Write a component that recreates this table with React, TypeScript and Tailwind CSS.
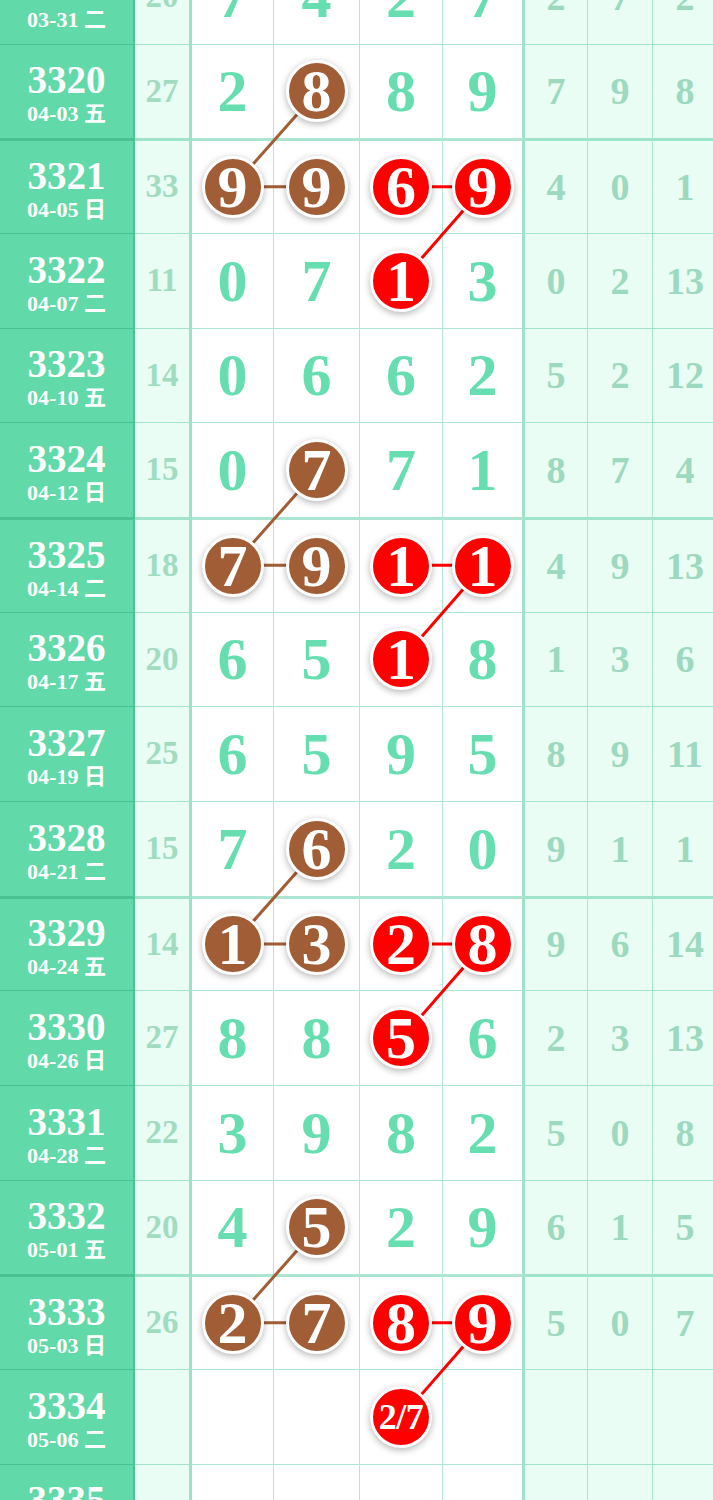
import React from "react";

type Row = { p: string; d: string; s: string; n: string[]; r: string[] };

const rows: Row[] = [
  { p: "3319", d: "03-31 二", s: "20", n: ["7", "4", "2", "7"], r: ["2", "7", "2"] },
  { p: "3320", d: "04-03 五", s: "27", n: ["2", "8", "8", "9"], r: ["7", "9", "8"] },
  { p: "3321", d: "04-05 日", s: "33", n: ["9", "9", "6", "9"], r: ["4", "0", "1"] },
  { p: "3322", d: "04-07 二", s: "11", n: ["0", "7", "1", "3"], r: ["0", "2", "13"] },
  { p: "3323", d: "04-10 五", s: "14", n: ["0", "6", "6", "2"], r: ["5", "2", "12"] },
  { p: "3324", d: "04-12 日", s: "15", n: ["0", "7", "7", "1"], r: ["8", "7", "4"] },
  { p: "3325", d: "04-14 二", s: "18", n: ["7", "9", "1", "1"], r: ["4", "9", "13"] },
  { p: "3326", d: "04-17 五", s: "20", n: ["6", "5", "1", "8"], r: ["1", "3", "6"] },
  { p: "3327", d: "04-19 日", s: "25", n: ["6", "5", "9", "5"], r: ["8", "9", "11"] },
  { p: "3328", d: "04-21 二", s: "15", n: ["7", "6", "2", "0"], r: ["9", "1", "1"] },
  { p: "3329", d: "04-24 五", s: "14", n: ["1", "3", "2", "8"], r: ["9", "6", "14"] },
  { p: "3330", d: "04-26 日", s: "27", n: ["8", "8", "5", "6"], r: ["2", "3", "13"] },
  { p: "3331", d: "04-28 二", s: "22", n: ["3", "9", "8", "2"], r: ["5", "0", "8"] },
  { p: "3332", d: "05-01 五", s: "20", n: ["4", "5", "2", "9"], r: ["6", "1", "5"] },
  { p: "3333", d: "05-03 日", s: "26", n: ["2", "7", "8", "9"], r: ["5", "0", "7"] },
  { p: "3334", d: "05-06 二", s: "", n: ["", "", "2/7", ""], r: ["", "", ""] },
  { p: "3335", d: "05-08 五", s: "", n: ["", "", "", ""], r: ["", "", ""] },
];

const brown = new Set(["1-1", "2-0", "2-1", "5-1", "6-0", "6-1", "9-1", "10-0", "10-1", "13-1", "14-0", "14-1"]);
const red = new Set(["2-2", "2-3", "3-2", "6-2", "6-3", "7-2", "10-2", "10-3", "11-2", "14-2", "14-3", "15-2"]);
const thickRows = new Set([2, 6, 10, 14]);

const RH = 94.67;
const XC = [233, 317, 401.5, 484];
const yc = (i: number) => i * RH + RH / 2 + 1;

function Ball({ v, color }: { v: string; color: "brown" | "red" }) {
  const bg = color === "brown" ? "bg-[#a15d36]" : "bg-[#ff0000]";
  const small = v.length > 1;
  return (
    <div
      className={`relative z-10 flex h-[62px] w-[62px] items-center justify-center rounded-full border-[3px] border-white ${bg} shadow-[0_2px_7px_rgba(0,0,0,0.3)] text-white leading-none`}
    >
      <span className={small ? "text-[36px] tracking-[-0.5px]" : "text-[60px]"}>{v}</span>
    </div>
  );
}

export default function App() {
  const segs: { x1: number; y1: number; x2: number; y2: number; c: string }[] = [];
  [1, 5, 9, 13].forEach((k) => {
    segs.push({ x1: XC[1], y1: yc(k), x2: XC[0], y2: yc(k + 1), c: "#a15d36" });
    segs.push({ x1: XC[0], y1: yc(k + 1), x2: XC[1], y2: yc(k + 1), c: "#a15d36" });
    segs.push({ x1: XC[2], y1: yc(k + 1), x2: XC[3], y2: yc(k + 1), c: "#ff0000" });
    segs.push({ x1: XC[3], y1: yc(k + 1), x2: XC[2], y2: yc(k + 2), c: "#ff0000" });
  });

  return (
    <div className="h-[1500px] w-[713px] overflow-hidden bg-white font-['Liberation_Serif','Noto_Sans_CJK_SC',serif] font-bold">
      <div className="relative mt-[-51px] w-[730px]">
        <svg className="absolute left-0 top-0" width={730} height={rows.length * RH}>
          {segs.map((s, i) => (
            <line key={i} x1={s.x1} y1={s.y1} x2={s.x2} y2={s.y2} stroke={s.c} strokeWidth={3} />
          ))}
        </svg>
        {rows.map((row, i) => {
          const bt = thickRows.has(i) ? "border-t-[3px]" : "border-t";
          return (
            <div key={i} className="flex h-[94.67px]">
              <div
                className={`flex w-[135px] shrink-0 flex-col items-center justify-center bg-[#62d9a9] pt-[4px] text-white border-r-2 border-r-[rgba(30,160,110,0.35)] ${bt} border-t-[rgba(30,150,105,0.35)]`}
              >
                <div className="text-[39px] leading-[40px]">{row.p}</div>
                <div className="mt-[2px] text-[22px] leading-[24px]">{row.d}</div>
              </div>
              <div
                className={`flex w-[57px] shrink-0 items-center justify-center bg-[#e9fdf4] text-[33px] text-[#a1dcc1] border-r-[3px] border-r-[rgba(30,185,130,0.38)] ${bt} border-t-[rgba(30,185,130,0.36)]`}
              >
                {row.s}
              </div>
              {row.n.map((v, j) => {
                const key = `${i}-${j}`;
                const w = ["w-[82px]", "w-[86px]", "w-[83px]", "w-[82px]"][j];
                const br =
                  j === 3
                    ? "border-r-[3px] border-r-[rgba(30,185,130,0.42)]"
                    : "border-r border-r-[rgba(30,190,130,0.34)]";
                return (
                  <div
                    key={j}
                    className={`flex ${w} shrink-0 items-center justify-center text-[60px] leading-none text-[#66deb0] ${br} ${bt} border-t-[rgba(30,185,130,0.36)]`}
                  >
                    {brown.has(key) ? (
                      <Ball v={v} color="brown" />
                    ) : red.has(key) ? (
                      <Ball v={v} color="red" />
                    ) : (
                      v
                    )}
                  </div>
                );
              })}
              {row.r.map((v, j) => (
                <div
                  key={j}
                  className={`flex ${["w-[63px]", "w-[65px]", "w-[65px]"][j]} shrink-0 items-center justify-center bg-[#e9fdf4] text-[38px] leading-none text-[#9cd9be] border-r border-r-[rgba(30,185,130,0.32)] ${bt} border-t-[rgba(30,185,130,0.36)]`}
                >
                  {v}
                </div>
              ))}
            </div>
          );
        })}
      </div>
    </div>
  );
}
